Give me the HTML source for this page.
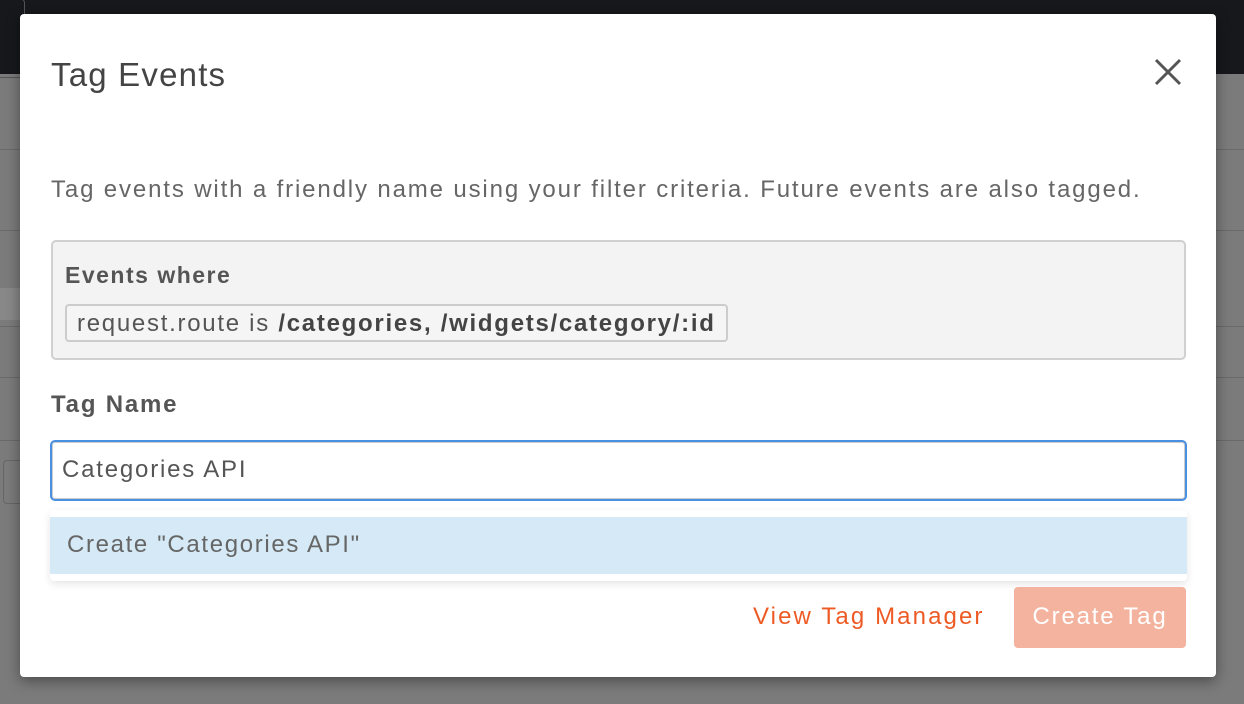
<!DOCTYPE html>
<html><head><meta charset="utf-8"><style>
*{box-sizing:border-box;margin:0;padding:0}
body{width:1244px;height:704px;overflow:hidden;background:#7b7b7b;font-family:"Liberation Sans",sans-serif;position:relative;letter-spacing:1.8px}
.top{position:absolute;left:0;top:0;width:1244px;height:74px;background:#16181b}
.ln{position:absolute;left:0;width:1244px;height:1px;background:#6a6a6a}
.modal{position:absolute;left:20px;top:14px;width:1196px;height:663px;background:#fff;border-radius:4px;box-shadow:0 4px 14px rgba(0,0,0,.4)}
.t{position:absolute;color:#444;white-space:nowrap}
</style></head><body>
<div class="top"></div>
<div style="position:absolute;left:-5px;top:-2px;width:30px;height:80px;border:1px solid #555;border-radius:5px"></div>
<div class="ln" style="top:149px"></div>
<div class="ln" style="top:230px"></div>
<div style="position:absolute;left:0;top:288px;width:20px;height:32px;background:#888"></div>
<div class="ln" style="top:326px"></div>
<div class="ln" style="top:377px"></div>
<div class="ln" style="top:440px"></div>
<div style="position:absolute;left:3px;top:460px;width:272px;height:44px;border:1px solid #666;border-radius:4px"></div>
<div class="modal">
<div class="t" style="left:31px;top:42px;font-size:33px;color:#444;letter-spacing:1.2px">Tag Events</div>
<svg style="position:absolute;left:1134px;top:44px" width="28" height="28" viewBox="0 0 28 28"><path d="M2 2L26 26M26 2L2 26" stroke="#555" stroke-width="3"/></svg>
<div class="t" style="left:31px;top:162px;font-size:24px;color:#666;letter-spacing:1.86px">Tag events with a friendly name using your filter criteria. Future events are also tagged.</div>
<div style="position:absolute;left:31px;top:226px;width:1135px;height:120px;background:#f3f3f3;border:2px solid #d0d0d0;border-radius:5px"></div>
<div class="t" style="left:45px;top:248px;font-size:23px;font-weight:bold;color:#555;letter-spacing:1.5px">Events where</div>
<div style="position:absolute;left:45px;top:290px;width:663px;height:38px;border:2px solid #ccc;border-radius:4px;background:#f5f5f5;font-size:24px;color:#555;padding:4px 0 0 10px;white-space:nowrap;letter-spacing:1.72px">request.route is <b style="color:#444">/categories, /widgets/category/:id</b></div>
<div class="t" style="left:31px;top:377px;font-size:24px;font-weight:bold;color:#555">Tag Name</div>
<div style="position:absolute;left:30px;top:426px;width:1137px;height:61px;border:2px solid #4a90e2;border-radius:5px;box-shadow:inset 0 0 0 1px #ccc;font-size:24px;color:#555;padding:14px 0 0 10px">Categories API</div>
<div style="position:absolute;left:30px;top:496px;width:1137px;height:71px;background:#fff;border-radius:4px;box-shadow:0 3px 8px rgba(0,0,0,.1)"></div>
<div style="position:absolute;left:30px;top:503px;width:1137px;height:57px;background:#d5eaf6;font-size:24px;color:#666;padding:14px 0 0 17px;letter-spacing:1.65px">Create "Categories API"</div>
<div class="t" style="left:733px;top:589px;font-size:24px;color:#ee5a24;letter-spacing:2.1px">View Tag Manager</div>
<div style="position:absolute;left:994px;top:573px;width:172px;height:61px;background:#f4b39e;border-radius:4px;color:#fff;font-size:24px;text-align:center;padding-top:16px">Create Tag</div>
</div>
</body></html>
